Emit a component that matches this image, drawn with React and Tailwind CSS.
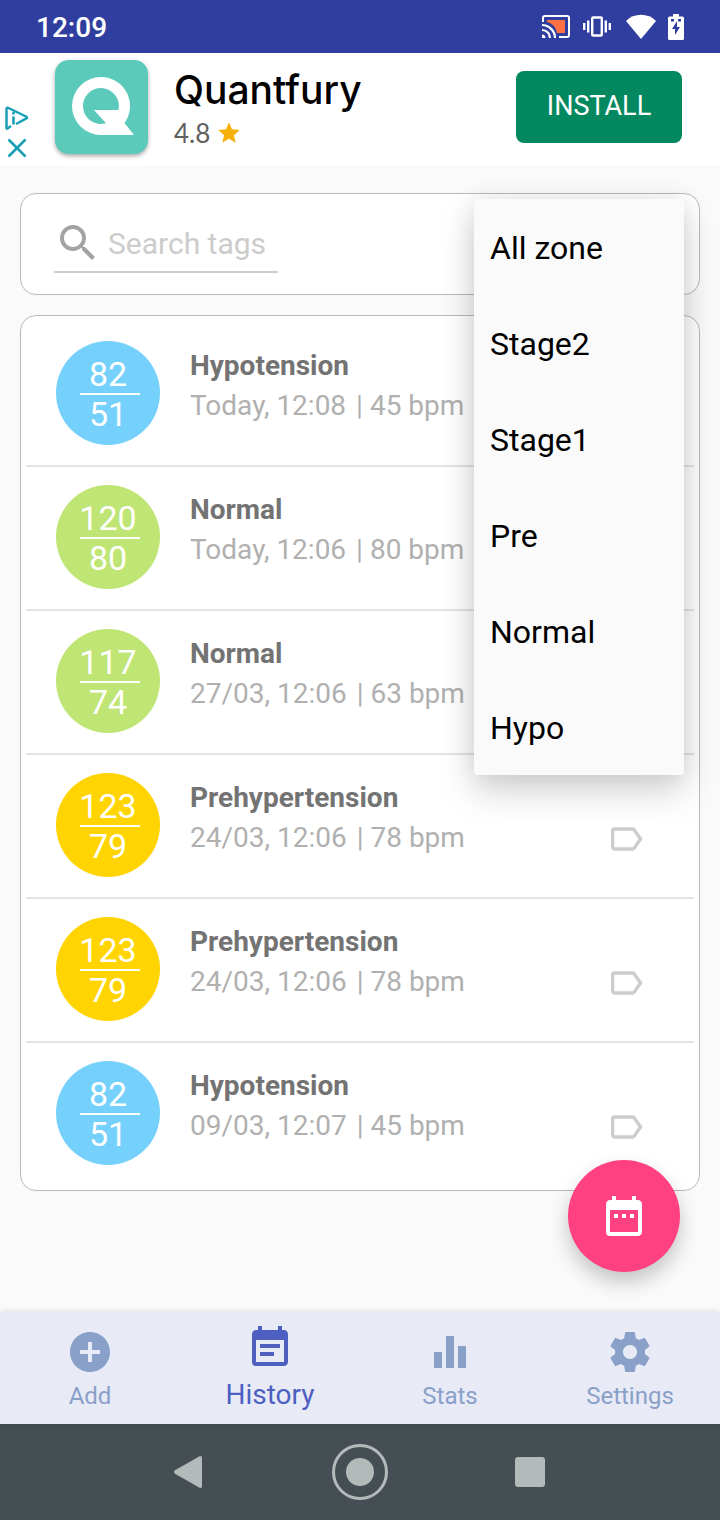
import {
  MdAddCircle,
  MdDateRange,
  MdEqualizer,
  MdEventNote,
  MdLabelOutline,
  MdSearch,
  MdStar,
} from 'react-icons/md'

const ZONES = ['All zone', 'Stage2', 'Stage1', 'Pre', 'Normal', 'Hypo']

const READINGS = [
  { id: 1, sys: 82, dia: 51, zone: 'Hypotension', when: 'Today, 12:08', bpm: 45, color: 'bg-[#75d1fb]' },
  { id: 2, sys: 120, dia: 80, zone: 'Normal', when: 'Today, 12:06', bpm: 80, color: 'bg-[#bfe575]' },
  { id: 3, sys: 117, dia: 74, zone: 'Normal', when: '27/03, 12:06', bpm: 63, color: 'bg-[#bfe575]' },
  { id: 4, sys: 123, dia: 79, zone: 'Prehypertension', when: '24/03, 12:06', bpm: 78, color: 'bg-[#ffd400]' },
  { id: 5, sys: 123, dia: 79, zone: 'Prehypertension', when: '24/03, 12:06', bpm: 78, color: 'bg-[#ffd400]' },
  { id: 6, sys: 82, dia: 51, zone: 'Hypotension', when: '09/03, 12:07', bpm: 45, color: 'bg-[#75d1fb]' },
]

// Classic Material gear, heavier than the one in react-icons
function GearIcon({ className }) {
  return (
    <svg className={className} viewBox="0 0 24 24" fill="currentColor">
      <path d="M19.430 12.980c.04-.32.07-.64.07-.98s-.03-.66-.07-.98l2.110-1.650c.19-.15.24-.42.12-.64l-2-3.460c-.12-.22-.39-.3-.61-.22l-2.490 1c-.52-.4-1.080-.73-1.690-.98l-.38-2.650C14.460 2.180 14.250 2 14 2h-4c-.25 0-.46.18-.49.42l-.38 2.650c-.61.25-1.170.59-1.690.98l-2.490-1c-.23-.09-.49 0-.61.22l-2 3.460c-.13.22-.07.49.12.64l2.110 1.650c-.04.32-.07.65-.07.98s.03.66.07.98l-2.110 1.650c-.19.15-.24.42-.12.64l2 3.460c.12.22.39.3.61.22l2.490-1c.52.4 1.080.73 1.690.98l.38 2.650c.03.24.24.42.49.42h4c.25 0 .46-.18.49-.42l.38-2.650c.61-.25 1.170-.59 1.690-.98l2.490 1c.23.09.49 0 .61-.22l2-3.460c.12-.22.07-.49-.12-.64l-2.110-1.650zM12 15.500c-1.930 0-3.500-1.570-3.500-3.500s1.570-3.500 3.500-3.500 3.500 1.570 3.500 3.500-1.570 3.500-3.500 3.500z" />
    </svg>
  )
}

const TABS = [
  { label: 'Add', Icon: MdAddCircle },
  { label: 'History', Icon: MdEventNote, active: true },
  { label: 'Stats', Icon: MdEqualizer },
  { label: 'Settings', Icon: GearIcon },
]

function StatusBar() {
  return (
    <header className="flex h-[53px] items-center justify-between bg-[#303f9f] px-9 text-white">
      <span className="pt-[2px] text-[28px] leading-8 font-medium">12:09</span>
      <div className="flex items-center">
        {/* Cast */}
        <svg className="mr-[13px] h-6 w-7" viewBox="0 0 28 24" fill="none">
          <path d="M5 5h18v13h-8C14 12 10 8 5 7z" fill="#ff7043" />
          <path d="M1 7V3q0-2 2-2h22q2 0 2 2v17q0 2-2 2h-8" stroke="#fff" strokeWidth="2" />
          <path d="M0 10c7 0 13 6 13 13M0 15c4.500 0 8 3.500 8 8" stroke="#fff" strokeWidth="2.200" />
          <path d="M0 19.500a3.500 3.500 0 0 1 3.500 3.500H0z" fill="#fff" />
        </svg>
        {/* Vibrate */}
        <svg className="mr-[15px] h-6 w-7" viewBox="0 0 28 24" fill="none" stroke="#fff">
          <rect x="9.200" y="2.500" width="9.600" height="18" rx="1" strokeWidth="2.400" />
          <path d="M1.200 8v7M26.800 8v7M5.200 5.500v12M22.800 5.500v12" strokeWidth="2.400" />
        </svg>
        {/* Wifi */}
        <svg className="mr-3 h-[26px] w-[30px]" viewBox="0 0 30 26" fill="#fff">
          <path d="M15 25 0 7C8-1.500 22-1.500 30 7z" />
        </svg>
        {/* Battery */}
        <svg className="h-[26px] w-4" viewBox="0 0 16 26">
          <path d="M5 0h6v2.500h3.500A1.500 1.500 0 0 1 16 4v20.500a1.500 1.500 0 0 1-1.500 1.500h-13A1.500 1.500 0 0 1 0 24.500V4a1.500 1.500 0 0 1 1.500-1.500H5z" fill="#fff" />
          <path d="M9 7v6h3l-5 8v-6H4zM3 5h3v2.500H3zM10 5h3v2.500h-3z" fill="#303f9f" />
        </svg>
      </div>
    </header>
  )
}

function AdBanner() {
  return (
    <section className="flex h-28 items-center bg-white pr-[38px] pb-1 pl-1" aria-label="Advertisement">
      <div className="flex w-[50px] flex-col gap-1 pt-[52px] text-[#1a9fb5]">
        <a href="#adchoices" aria-label="AdChoices">
          <svg className="h-[26px] w-[26px]" viewBox="0 0 26 26" fill="none" stroke="currentColor" strokeLinejoin="round">
            <path d="M7 21 3.500 23.500Q2.500 24 2.500 22.500V4Q2.500 2 4.500 3L22 11.500q2 1.200 0 2.200L12 19" strokeWidth="2.500" />
            <path d="M9.500 11.500v8M9.500 6.800v2.700" strokeWidth="2.600" />
          </svg>
        </a>
        <button type="button" aria-label="Close ad">
          <svg className="h-[26px] w-[26px]" viewBox="0 0 26 26" fill="none" stroke="currentColor" strokeWidth="2.600">
            <path d="M4.500 4.500l17 17M21.500 4.500l-17 17" />
          </svg>
        </button>
      </div>

      {/* App logo */}
      <svg className="h-[96px] w-[94px] shrink-0 drop-shadow-[0_2px_2px_rgba(0,0,0,0.35)]" viewBox="0 0 94 96">
        <rect x="1" y="1" width="93" height="94" rx="14" fill="#5bcabb" />
        <path
          d="M47 18a29 29 0 1 0 0 58h33L70.500 64A29 29 0 0 0 47 18zm17.500 33a18 18 0 1 0-12.500 13.300L40 51z"
          fill="#fff"
          fillRule="evenodd"
        />
      </svg>

      <div className="flex flex-1 flex-col pt-[6px] pl-[26px]">
        <h2 className="font-[Inter,sans-serif] text-[39px] leading-[46px] font-medium text-black">Quantfury</h2>
        <p className="flex items-center gap-[6px] font-[Lato,sans-serif] text-[26px] leading-10 text-[#616161]">
          4.8
          <MdStar className="h-[26px] w-[26px] text-[#f5b20a]" />
        </p>
      </div>

      <button type="button" className="h-[72px] w-[166px] rounded-lg bg-[#04885f] pb-[2px] text-[27px] leading-8 text-white">
        INSTALL
      </button>
    </section>
  )
}

function ZoneMenu() {
  return (
    <ul
      role="menu"
      aria-label="Filter by zone"
      className="absolute top-[5px] right-[15px] z-10 w-[210px] rounded-sm bg-[#fafafa] shadow-[0_16px_36px_rgba(0,0,0,0.18),0_0_24px_rgba(0,0,0,0.08)]"
    >
      {ZONES.map((zone) => (
        <li key={zone} role="none">
          <button type="button" role="menuitem" className="block h-24 w-full px-4 pt-[2px] text-left text-[32px] leading-10 text-black">
            {zone}
          </button>
        </li>
      ))}
    </ul>
  )
}

function SearchCard() {
  return (
    <div className="relative h-[102px] rounded-2xl border border-[#b9b9b9] bg-white px-[33px] pt-[21px]">
      <label className="flex h-[58px] w-56 items-center border-b-2 border-[#cccccc]">
        <MdSearch className="h-12 w-12 shrink-0 text-[#a3a3a3]" />
        <input
          type="text"
          aria-label="Search tags"
          placeholder="Search tags"
          className="ml-[6px] w-full min-w-0 pt-[2px] text-[30px] leading-9 text-gray-600 outline-none placeholder:text-[#cccccc]"
        />
      </label>
      <ZoneMenu />
    </div>
  )
}

function ReadingRow({ reading }) {
  return (
    <li className="flex h-36 border-t-2 border-[#e4e4e4] pt-[18px] pr-11 pl-[30px] first:border-transparent">
      <div className={`flex h-[104px] w-[104px] shrink-0 flex-col items-center rounded-full pt-[14px] text-[34px] text-white ${reading.color}`}>
        <span className="leading-[38px]">{reading.sys}</span>
        <hr className="ml-1 w-[60px] border-t-2 border-white" />
        <span className="leading-[38px]">{reading.dia}</span>
      </div>
      <div className="ml-[30px] flex-1 pt-[5px]">
        <h3 className="text-[28px] leading-10 font-bold text-[#737373]">{reading.zone}</h3>
        <p className="flex gap-[10px] text-[28px] leading-10 text-[#b0b0b0]">
          <span>{reading.when}</span>
          <span>| {reading.bpm} bpm</span>
        </p>
      </div>
      <button type="button" aria-label="Edit tags" className="mt-[42px] flex h-12 w-12 items-center justify-center">
        <MdLabelOutline className="h-10 w-10 text-[#cccccc]" />
      </button>
    </li>
  )
}

function TabBar() {
  return (
    <nav className="z-10 grid h-28 grid-cols-4 bg-[#e8eaf6] shadow-[0_0_6px_rgba(0,0,0,0.15)]">
      {TABS.map(({ label, Icon, active }) => (
        <a
          key={label}
          href={`#${label.toLowerCase()}`}
          className={
            active
              ? 'flex flex-col items-center pt-3 text-[28px] text-[#4d5fc1]'
              : 'flex flex-col items-center pt-4 text-[24px] text-[#89a0c9]'
          }
        >
          <Icon className="h-12 w-12" />
          <span className={active ? 'pt-1 leading-[38px]' : 'pt-1 leading-8'}>{label}</span>
        </a>
      ))}
    </nav>
  )
}

function SystemNav() {
  return (
    <footer className="flex h-24 items-center justify-center gap-[114px] bg-[#454e53]">
      <button type="button" aria-label="Back">
        <svg className="h-14 w-14" viewBox="0 0 56 56" fill="#b4b9b9">
          <path d="M37.500 12.300 13 26.300q-2 1.700 0 3.400L37.500 43.700q2.500.800 2.500-1.700V14q0-2.500-2.500-1.700z" />
        </svg>
      </button>
      <button type="button" aria-label="Home">
        <svg className="h-14 w-14" viewBox="0 0 56 56">
          <circle cx="28" cy="28" r="26.500" fill="none" stroke="#b4b9b9" strokeWidth="3" />
          <circle cx="28" cy="28" r="14" fill="#b4b9b9" />
        </svg>
      </button>
      <button type="button" aria-label="Recent apps">
        <svg className="h-14 w-14" viewBox="0 0 56 56" fill="#b4b9b9">
          <rect x="13" y="13" width="30" height="30" rx="3" />
        </svg>
      </button>
    </footer>
  )
}

export default function App() {
  return (
    <div className="flex min-h-screen flex-col bg-[#fafafa] font-[Roboto,sans-serif]">
      <StatusBar />
      <AdBanner />

      <main className="relative flex flex-1 flex-col gap-5 px-5 pt-7 pb-[121px]">
        <SearchCard />
        <ul className="rounded-2xl border border-[#b9b9b9] bg-white p-[5px]">
          {READINGS.map((reading) => (
            <ReadingRow key={reading.id} reading={reading} />
          ))}
        </ul>

        <button
          type="button"
          aria-label="Pick date range"
          className="absolute right-10 bottom-10 flex h-28 w-28 items-center justify-center rounded-full bg-[#ff4081] text-white shadow-[0_10px_20px_rgba(0,0,0,0.22)]"
        >
          <MdDateRange className="h-12 w-12" />
        </button>
      </main>

      <TabBar />
      <SystemNav />
    </div>
  )
}
